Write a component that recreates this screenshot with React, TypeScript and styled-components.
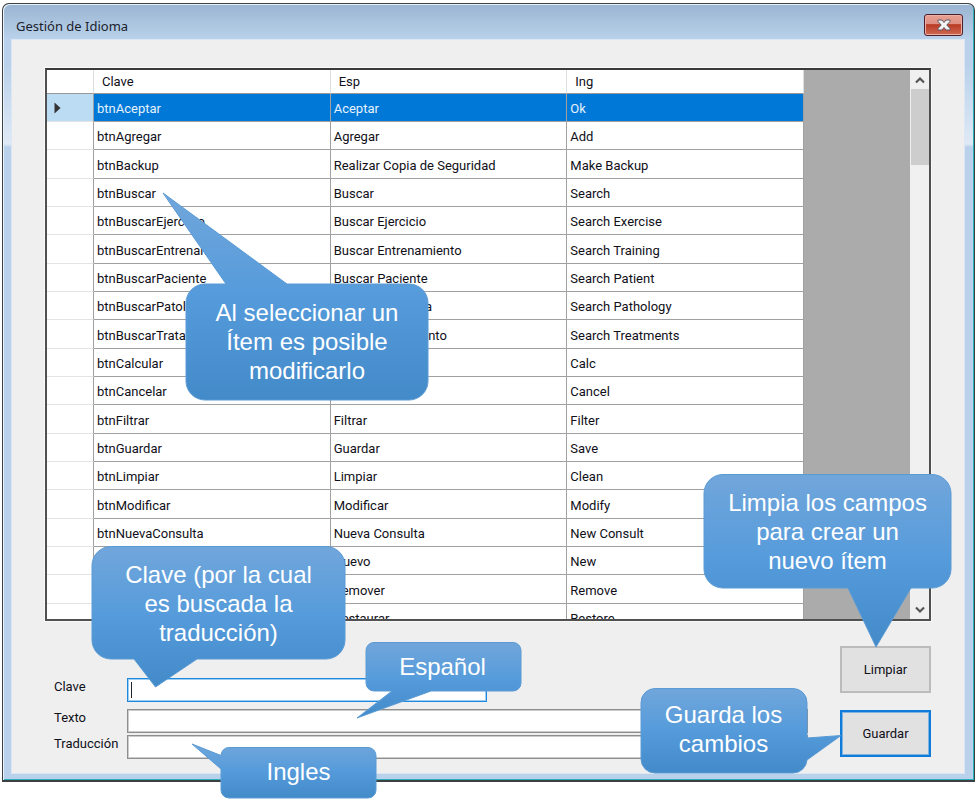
import React from "react";
import styled, { createGlobalStyle } from "styled-components";

const GlobalStyle = createGlobalStyle`
  *, *::before, *::after { box-sizing: border-box; }
  body {
    margin: 0;
    background: #ffffff;
    color: #101018;
    font-family: Roboto, "Liberation Sans", sans-serif;
    font-size: 13px;
  }
`;

const Page = styled.div`
  position: relative;
  min-height: 100vh;
  padding: 3px 2px 21px;
  display: flex;
  overflow: hidden;
`;

const Window = styled.main`
  flex: 1;
  min-width: 0;
  height: calc(100vh - 24px);
  display: flex;
  flex-direction: column;
  padding: 0 9px 6px 8px;
  border: 1px solid #3c4043;
  border-bottom-width: 2px;
  border-radius: 7px 7px 0 0;
  box-shadow: inset 1px 1px 0 #eaf2fa, inset -1px -1px 0 #2ab0bd;
  background:
    linear-gradient(#9ab5d2, #b9d1ea 35px, #b9d1ea 60px, #dfe9f6 140px, #b9d1ea 143px, #b9d1ea);
`;

const TitleBar = styled.header`
  flex: none;
  height: 35px;
  display: flex;
  align-items: flex-start;
  justify-content: space-between;
  padding: 10px 2px 0 5px;
`;

const Title = styled.h1`
  margin: 0;
  padding-top: 3px;
  font: 400 13px/18px "Noto Sans", sans-serif;
  color: #1c222b;
`;

const CloseButton = styled.button`
  width: 39px;
  height: 22px;
  padding: 0;
  display: grid;
  place-items: center;
  border: 1px solid #4d1f2b;
  border-radius: 3px;
  background: linear-gradient(#e8a093, #dd8f82 45%, #b93a24 48%, #cf6a55);
  box-shadow: inset 0 0 0 1px #edb0a5;
`;

const Client = styled.section`
  flex: 1;
  min-height: 0;
  display: flex;
  flex-direction: column;
  padding: 28px 33px 14px;
  border: 1px solid #dbe7f4;
  background: #efefef;
`;

const GridFrame = styled.div`
  flex: 1;
  min-height: 0;
  display: flex;
  border: 2px solid #505050;
  border-top-color: #3a3a3a;
  box-shadow: 0 0 0 1px #f9f9f9;
  background: #ababab;
`;

const GridView = styled.div`
  flex: 1;
  min-width: 0;
  overflow: hidden;
`;

const Table = styled.table`
  width: 757px;
  table-layout: fixed;
  border-collapse: separate;
  border-spacing: 0;
  background: #ffffff;
`;

const MarkerCol = styled.col`
  width: 47px;
`;

const HeadCell = styled.th`
  height: 24px;
  padding: 0 8px;
  text-align: left;
  font-weight: 400;
  border-right: 1px solid #dedede;
  border-bottom: 1px solid #999999;
`;

const Row = styled.tr<{ $selected: boolean }>`
  height: 28px;
  color: ${(p) => (p.$selected ? "#e6f2fc" : "#101018")};
  background: ${(p) => (p.$selected ? "#0078d7" : "#ffffff")};
  &:nth-child(3n) { height: 29px; }
`;

const Marker = styled.th<{ $selected: boolean }>`
  padding: 0 0 0 7px;
  text-align: left;
  border-right: 1px solid #a0a0a0;
  border-bottom: 1px solid #e4e4e4;
  background: ${(p) => (p.$selected ? "#bcdcf4" : "#ffffff")};
  svg { display: block; }
`;

const Cell = styled.td`
  padding: 2px 3px 0;
  white-space: nowrap;
  border-right: 1px solid #a0a0a0;
  border-bottom: 1px solid #a0a0a0;
`;

const Scrollbar = styled.div`
  width: 19px;
  display: flex;
  flex-direction: column;
  background: #f0f0f0;
`;

const ScrollButton = styled.button`
  height: 19px;
  padding: 0;
  display: grid;
  place-items: center;
  border: 0;
  background: transparent;
`;

const Track = styled.div`
  flex: 1;
  padding-left: 1px;
`;

const Thumb = styled.div`
  height: 76px;
  background: #cdcdcd;
`;

const Bottom = styled.div`
  flex: none;
  display: flex;
  gap: 32px;
  padding-left: 9px;
`;

const Form = styled.form`
  flex: 1;
  display: flex;
  flex-direction: column;
  padding-top: 57px;
`;

const Field = styled.div<{ $gap: number }>`
  display: flex;
  margin-bottom: ${(p) => p.$gap}px;
`;

const Label = styled.label`
  width: 73px;
  flex: none;
  line-height: 17px;
`;

const Input = styled.input<{ $active?: boolean }>`
  height: 24px;
  min-width: 0;
  padding: 0 4px;
  font: inherit;
  outline: 0;
  ${(p) =>
    p.$active
      ? `flex: 0 1 360px;
         border: 1px solid #1f87dc;
         box-shadow: inset 0 0 0 1px #9ccdf2;
         background: linear-gradient(#222, #222) 3px 3px / 1px 16px no-repeat #fff;`
      : `flex: 1;
         border: 1px solid #8e8e8e;
         box-shadow: inset 0 0 0 1px #cccccc;
         background: #fff;`}
`;

const Actions = styled.div`
  display: flex;
  flex-direction: column;
  gap: 17px;
  padding-top: 25px;
`;

const Action = styled.button<{ $default?: boolean }>`
  width: 91px;
  height: 47px;
  font: inherit;
  color: #101018;
  border: 2px solid ${(p) => (p.$default ? "#0f7cd9" : "#bcbcbc")};
  box-shadow: ${(p) => (p.$default ? "inset 0 0 0 1px #7fb4e2" : "none")};
  background: #e1e1e1;
`;

const CalloutBox = styled.aside<{
  $w: number;
  $h: number;
  $place: string;
  $pad: string;
}>`
  position: absolute;
  ${(p) => p.$place};
  width: ${(p) => p.$w}px;
  height: ${(p) => p.$h}px;
  padding: ${(p) => p.$pad};
  display: grid;
  place-items: center;
  pointer-events: none;
`;

const Shape = styled.svg`
  position: absolute;
  inset: 0;
  width: 100%;
  height: 100%;
  overflow: visible;
`;

const CalloutText = styled.p`
  position: relative;
  margin: 0;
  text-align: center;
  white-space: pre-line;
  color: #ffffff;
  font: 24px/29px "Liberation Sans", Arial, sans-serif;
`;

type CalloutProps = {
  id: string;
  w: number;
  h: number;
  place: string;
  pad: string;
  d: string;
  text: string;
};

function Callout({ id, w, h, place, pad, d, text }: CalloutProps) {
  return (
    <CalloutBox $w={w} $h={h} $place={place} $pad={pad}>
      <Shape viewBox={`0 0 ${w} ${h}`} aria-hidden="true">
        <defs>
          <linearGradient id={id} x1="0" y1="0" x2="0" y2="1">
            <stop offset="0" stopColor="#71a6db" />
            <stop offset="0.5" stopColor="#559bdb" />
            <stop offset="1" stopColor="#438ac9" />
          </linearGradient>
        </defs>
        <path d={d} fill={`url(#${id})`} stroke="#5b9bd5" />
      </Shape>
      <CalloutText>{text}</CalloutText>
    </CalloutBox>
  );
}

const callouts: CalloutProps[] = [
  {
    id: "select",
    w: 266,
    h: 208,
    place: "left: 163px; top: 193px",
    pad: "90px 0 1px 22px",
    d: "M0 0 L124 91 H246 a19 19 0 0 1 19 19 V188 a19 19 0 0 1 -19 19 H42 a19 19 0 0 1 -19 -19 V110 a19 19 0 0 1 19 -19 H63 Z",
    text: "Al seleccionar un\nÍtem es posible\nmodificarlo",
  },
  {
    id: "key",
    w: 255,
    h: 142,
    place: "left: 91px; bottom: 115px",
    pad: "1px 0 28px",
    d: "M20 .5 H235 a19 19 0 0 1 19 19 V94 a19 19 0 0 1 -19 19 H106 L64.500 141 L43 113 H20 a19 19 0 0 1 -19 -19 V19.500 a19 19 0 0 1 19 -19 Z",
    text: "Clave (por la cual\nes buscada la\ntraducción)",
  },
  {
    id: "spanish",
    w: 165,
    h: 76,
    place: "left: 357px; bottom: 85px",
    pad: "0 0 28px 6px",
    d: "M17 .5 H156 a8 8 0 0 1 8 8 V41 a8 8 0 0 1 -8 8 H74 L0 76 L35 49 H17 a8 8 0 0 1 -8 -8 V8.500 a8 8 0 0 1 8 -8 Z",
    text: "Español",
  },
  {
    id: "english",
    w: 185,
    h: 55,
    place: "left: 192px; bottom: 4px",
    pad: "0 0 1px 28px",
    d: "M37 3.500 H176 a8 8 0 0 1 8 8 V46 a8 8 0 0 1 -8 8 H37 a8 8 0 0 1 -8 -8 V25 L0 0 L29 11.500 a8 8 0 0 1 8 -8 Z",
    text: "Ingles",
  },
  {
    id: "clean",
    w: 249,
    h: 173,
    place: "right: 25px; bottom: 156px",
    pad: "0 0 58px",
    d: "M20 .5 H229 a19 19 0 0 1 19 19 V95 a19 19 0 0 1 -19 19 H208 L173 173 L145 114 H20 a19 19 0 0 1 -19 -19 V19.500 a19 19 0 0 1 19 -19 Z",
    text: "Limpia los campos\npara crear un\nnuevo ítem",
  },
  {
    id: "save",
    w: 201,
    h: 86,
    place: "right: 136px; bottom: 29px",
    pad: "0 34px 5px 0",
    d: "M15 .5 H153 a14 14 0 0 1 14 14 V50 L201 47.500 L167 72 a14 14 0 0 1 -14 13 H15 a14 14 0 0 1 -14 -14 V14.500 a14 14 0 0 1 14 -14 Z",
    text: "Guarda los\ncambios",
  },
];

const rows: [string, string, string][] = [
  ["btnAceptar", "Aceptar", "Ok"],
  ["btnAgregar", "Agregar", "Add"],
  ["btnBackup", "Realizar Copia de Seguridad", "Make Backup"],
  ["btnBuscar", "Buscar", "Search"],
  ["btnBuscarEjercicio", "Buscar Ejercicio", "Search Exercise"],
  ["btnBuscarEntrenamiento", "Buscar Entrenamiento", "Search Training"],
  ["btnBuscarPaciente", "Buscar Paciente", "Search Patient"],
  ["btnBuscarPatologia", "Buscar Patologia", "Search Pathology"],
  ["btnBuscarTratamiento", "Buscar Tratamiento", "Search Treatments"],
  ["btnCalcular", "Calcular", "Calc"],
  ["btnCancelar", "Cancelar", "Cancel"],
  ["btnFiltrar", "Filtrar", "Filter"],
  ["btnGuardar", "Guardar", "Save"],
  ["btnLimpiar", "Limpiar", "Clean"],
  ["btnModificar", "Modificar", "Modify"],
  ["btnNuevaConsulta", "Nueva Consulta", "New Consult"],
  ["btnNuevo", "Nuevo", "New"],
  ["btnRemover", "Remover", "Remove"],
  ["btnRestaurar", "Restaurar", "Restore"],
];

function Chevron({ down = false }: { down?: boolean }) {
  return (
    <svg width="10" height="8" viewBox="0 0 10 8" aria-hidden="true">
      <path
        d={down ? "M1 1.500 L5 5.500 L9 1.500" : "M1 6.500 L5 2.500 L9 6.500"}
        fill="none"
        stroke="#555"
        strokeWidth="2.200"
      />
    </svg>
  );
}

export default function App() {
  return (
    <Page>
      <GlobalStyle />
      <Window>
        <TitleBar>
          <Title>Gestión de Idioma</Title>
          <CloseButton aria-label="Cerrar">
            <svg width="14" height="12" viewBox="0 0 14 12" aria-hidden="true">
              <path
                d="M1 1 H5 L7 3.500 L9 1 H13 V2.500 L9.800 6 L13 9.500 V11 H9 L7 8.500 L5 11 H1 V9.500 L4.200 6 L1 2.500 Z"
                fill="#f4f4f4"
                stroke="#5c5866"
              />
            </svg>
          </CloseButton>
        </TitleBar>
        <Client>
          <GridFrame>
            <GridView>
              <Table>
                <colgroup>
                  <MarkerCol />
                  <col />
                  <col />
                  <col />
                </colgroup>
                <thead>
                  <tr>
                    <HeadCell aria-label="Fila" />
                    <HeadCell>Clave</HeadCell>
                    <HeadCell>Esp</HeadCell>
                    <HeadCell>Ing</HeadCell>
                  </tr>
                </thead>
                <tbody>
                  {rows.map(([key, esp, ing], i) => (
                    <Row key={key} $selected={i === 0}>
                      <Marker scope="row" $selected={i === 0}>
                        {i === 0 && (
                          <svg width="7" height="12" viewBox="0 0 7 12" aria-hidden="true">
                            <path d="M.5 .5 L6.500 6 L.5 11.500 Z" fill="#333" />
                          </svg>
                        )}
                      </Marker>
                      <Cell>{key}</Cell>
                      <Cell>{esp}</Cell>
                      <Cell>{ing}</Cell>
                    </Row>
                  ))}
                </tbody>
              </Table>
            </GridView>
            <Scrollbar>
              <ScrollButton aria-label="Subir">
                <Chevron />
              </ScrollButton>
              <Track>
                <Thumb />
              </Track>
              <ScrollButton aria-label="Bajar">
                <Chevron down />
              </ScrollButton>
            </Scrollbar>
          </GridFrame>
          <Bottom>
            <Form>
              <Field $gap={7}>
                <Label htmlFor="clave">Clave</Label>
                <Input id="clave" $active />
              </Field>
              <Field $gap={2}>
                <Label htmlFor="texto">Texto</Label>
                <Input id="texto" />
              </Field>
              <Field $gap={0}>
                <Label htmlFor="traduccion">Traducción</Label>
                <Input id="traduccion" />
              </Field>
            </Form>
            <Actions>
              <Action type="button">Limpiar</Action>
              <Action type="button" $default>
                Guardar
              </Action>
            </Actions>
          </Bottom>
        </Client>
      </Window>
      {callouts.map((c) => (
        <Callout key={c.id} {...c} />
      ))}
    </Page>
  );
}
